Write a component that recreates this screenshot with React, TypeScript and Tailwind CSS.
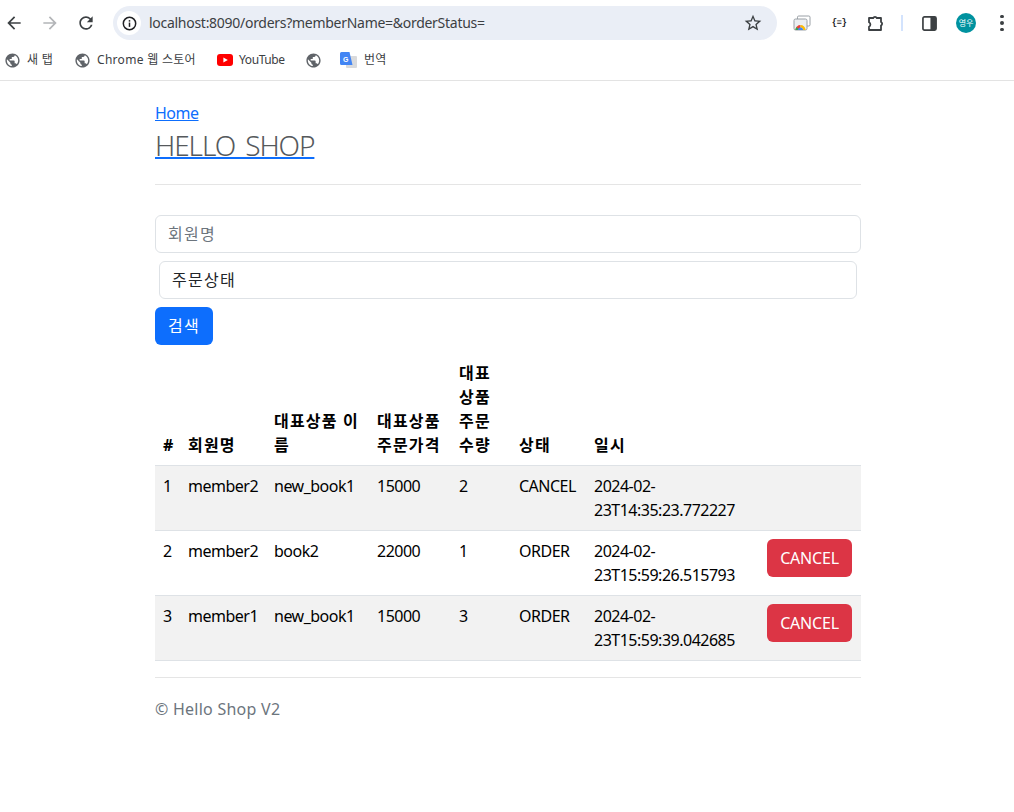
const font = "font-['Noto_Sans','Noto_Sans_CJK_KR',sans-serif]"

const orders = [
  { id: 1, member: 'member2', item: 'new_book1', price: 15000, count: 2, status: 'CANCEL', date: '2024-02-23T14:35:23.772227' },
  { id: 2, member: 'member2', item: 'book2', price: 22000, count: 1, status: 'ORDER', date: '2024-02-23T15:59:26.515793' },
  { id: 3, member: 'member1', item: 'new_book1', price: 15000, count: 3, status: 'ORDER', date: '2024-02-23T15:59:39.042685' },
]

const headers = ['#', '회원명', '대표상품 이름', '대표상품 주문가격', '대표상품 주문수량', '상태', '일시', '']

function Icon({ d, className }: { d: string; className: string }) {
  return (
    <svg viewBox="0 0 24 24" fill="currentColor" className={className}>
      <path d={d} />
    </svg>
  )
}

const backPath = 'M20 11H7.83l5.59-5.59L12 4l-8 8 8 8 1.41-1.41L7.83 13H20v-2z'
const forwardPath = 'M12 4l-1.41 1.41L16.17 11H4v2h12.17l-5.58 5.59L12 20l8-8z'
const reloadPath =
  'M17.65 6.35A7.958 7.958 0 0012 4c-4.42 0-7.99 3.58-7.99 8s3.57 8 7.99 8c3.73 0 6.84-2.55 7.73-6h-2.08A5.99 5.99 0 0112 18c-3.31 0-6-2.69-6-6s2.69-6 6-6c1.66 0 3.14.69 4.22 1.78L13 11h7V4l-2.35 2.35z'
const starPath =
  'M22 9.24l-7.19-.62L12 2 9.19 8.63 2 9.24l5.46 4.73L5.82 21 12 17.27 18.18 21l-1.63-7.03L22 9.24zM12 15.4l-3.76 2.27 1-4.28-3.32-2.88 4.38-.38L12 6.1l1.71 4.04 4.38.38-3.32 2.88 1 4.28L12 15.4z'
const globePath =
  'M12 2C6.48 2 2 6.48 2 12s4.48 10 10 10 10-4.48 10-10S17.52 2 12 2zm-1 17.93c-3.95-.49-7-3.85-7-7.93 0-.62.08-1.21.21-1.79L9 15v1c0 1.1.9 2 2 2v1.93zm6.9-2.54c-.26-.81-1-1.39-1.9-1.39h-1v-3c0-.55-.45-1-1-1H8v-2h2c.55 0 1-.45 1-1V7h2c1.1 0 2-.9 2-2v-.41c2.93 1.19 5 4.06 5 7.41 0 2.08-.8 3.97-2.1 5.39z'

function Globe() {
  return <Icon d={globePath} className="h-[17px] w-[17px] shrink-0 text-[#5f6368]" />
}

function Toolbar() {
  return (
    <div className="flex h-[40px] items-center pt-[6px]">
      <div className="flex w-[113px] shrink-0 items-center pl-[4px] text-[#3c4043]">
        <Icon d={backPath} className="h-[20px] w-[20px]" />
        <Icon d={forwardPath} className="ml-[16px] h-[20px] w-[20px] text-[#b3b5b8]" />
        <Icon d={reloadPath} className="ml-[16px] h-[20px] w-[20px]" />
      </div>
      <div className="flex h-[34px] w-[664px] shrink-0 items-center rounded-full bg-[#eaeef6] pl-[4px] pr-[14px]">
        <div className="flex h-[24px] w-[24px] shrink-0 items-center justify-center rounded-full bg-white">
          <svg viewBox="0 0 16 16" className="h-[15px] w-[15px]" fill="none">
            <circle cx="8" cy="8" r="6.6" stroke="#202124" strokeWidth="1.6" />
            <rect x="7.2" y="7" width="1.6" height="4.6" fill="#202124" />
            <rect x="7.2" y="4.4" width="1.6" height="1.6" fill="#202124" />
          </svg>
        </div>
        <span className="ml-[8px] flex-1 whitespace-nowrap text-[14px] tracking-[-0.28px] text-[#3c4043]">
          localhost:8090/orders?memberName=&amp;orderStatus=
        </span>
        <Icon d={starPath} className="h-[20px] w-[20px] text-[#3c4043]" />
      </div>
      <div className="flex flex-1 items-center pl-[16px]">
        {/* media / tab search */}
        <svg viewBox="0 0 18 16" className="h-[16px] w-[18px]" fill="none">
          <rect x="4.5" y="1" width="12.5" height="10" rx="1.2" stroke="#9aa0a6" />
          <rect x="1" y="4" width="13" height="11" rx="1.5" fill="#eceff1" stroke="#9aa0a6" />
          <path d="M2.500 15a5 5 0 0 1 5-5v5z" fill="#ea4335" />
          <path d="M7.500 10a5 5 0 0 1 5 5h-2.500a2.500 2.500 0 0 0-2.500-2.500z" fill="#fbbc04" />
          <path d="M5 15a2.500 2.500 0 0 1 5 0z" fill="#4285f4" />
          <path d="M2.500 15a5 5 0 0 1 .8-2.700l1.900 1.300a2.500 2.500 0 0 0-.2 1.400z" fill="#34a853" />
        </svg>
        <span className="ml-[20px] w-[16px] text-center font-['Liberation_Mono',monospace] text-[9px] font-bold tracking-[-0.5px] text-[#202124]">
          {'{≡}'}
        </span>
        <svg viewBox="0 0 18 18" className="ml-[20px] h-[18px] w-[18px]" fill="none" stroke="#3c4043" strokeWidth="1.8" strokeLinejoin="round">
          <path d="M2 4h4.200a2 2 0 0 1 3.600 0H14v4a2 2 0 0 1 0 3.600V16H2v-3.200a2.600 2.600 0 0 0 0-4.600z" />
        </svg>
        <div className="ml-[16px] h-[16px] w-[2px] bg-[#d3e3fd]" />
        <svg viewBox="0 0 16 16" className="ml-[19px] h-[15px] w-[15px]">
          <rect x="1" y="1" width="14" height="14" rx="1.6" fill="none" stroke="#3c4043" strokeWidth="1.8" />
          <rect x="9" y="1" width="6" height="14" fill="#3c4043" />
        </svg>
        <div className="ml-[19px] flex h-[20px] w-[20px] items-center justify-center rounded-full bg-[#00929f] text-[8px] text-white">
          영우
        </div>
        <div className="ml-[24px] flex flex-col gap-[3px]">
          <span className="h-[3.5px] w-[3.5px] rounded-full bg-[#3c4043]" />
          <span className="h-[3.5px] w-[3.5px] rounded-full bg-[#3c4043]" />
          <span className="h-[3.5px] w-[3.5px] rounded-full bg-[#3c4043]" />
        </div>
      </div>
    </div>
  )
}

function Bookmarks() {
  return (
    <div className="flex h-[41px] items-center border-b border-[#e3e3e3] pl-[4px] text-[12px] text-[#3c4043]">
      <Globe />
      <span className="ml-[6px] w-[28px] whitespace-nowrap tracking-[0.3px]">새 탭</span>
      <div className="ml-[19px]">
        <Globe />
      </div>
      <span className="ml-[6px] w-[100px] whitespace-nowrap tracking-[0.3px]">Chrome 웹 스토어</span>
      <svg viewBox="0 0 16 12" className="ml-[20px] h-[12px] w-[16px] shrink-0">
        <rect width="16" height="12" rx="3" fill="#ff0000" />
        <path d="M6.400 3.400 10.800 6l-4.400 2.600z" fill="#fff" />
      </svg>
      <span className="ml-[6px] w-[46px] whitespace-nowrap tracking-[-0.4px]">YouTube</span>
      <div className="ml-[20px]">
        <Globe />
      </div>
      <svg viewBox="0 0 17 17" className="ml-[18px] h-[17px] w-[17px] shrink-0">
        <rect x="6" y="4" width="11" height="12" rx="1" fill="#d9dadc" />
        <path d="M1.500 0h8l3 13H1.500A1.500 1.500 0 0 1 0 11.500V1.500A1.500 1.500 0 0 1 1.500 0z" fill="#4285f4" />
        <text x="3" y="9.500" fontSize="7" fontWeight="700" fill="#fff" fontFamily="Liberation Sans">
          G
        </text>
      </svg>
      <span className="ml-[7px] whitespace-nowrap tracking-[0.3px]">번역</span>
    </div>
  )
}

export default function App() {
  return (
    <div className={`${font} min-h-[812px] bg-white text-[16px] leading-[24px] text-[#212529]`}>
      <Toolbar />
      <Bookmarks />

      <div className="ml-[155px] w-[706px] pt-[20px]">
        <a href="#" className="block w-fit tracking-[-0.5px] text-[#0d6efd] underline">
          Home
        </a>
        <div className="border-b border-[#e5e5e5] pb-[22px]">
          <a href="#" className="mt-[3px] block w-fit text-[28px] leading-[34px] font-light tracking-[-1.1px] [word-spacing:4px] text-[#55595c] underline decoration-[#0d6efd] decoration-2">
            HELLO SHOP
          </a>
        </div>

        <form className="mt-[30px]">
          <input
            placeholder="회원명"
            className="block h-[38px] w-full rounded-[6px] border border-[#dee2e6] px-[12px] tracking-[1.3px] placeholder:text-[#6c757d]"
          />
          <select className="mx-[4px] mt-[8px] block h-[38px] w-[698px] appearance-none rounded-[6px] border border-[#dee2e6] bg-white px-[12px] tracking-[1.3px]">
            <option>주문상태</option>
          </select>
          <button type="button" className="mt-[8px] block h-[38px] w-[58px] rounded-[6px] bg-[#0d6efd] tracking-[1.3px] text-white">
            검색
          </button>
        </form>

        <table className="mt-[8px] w-full table-fixed border-collapse text-black">
          <colgroup>
            <col className="w-[25px]" />
            <col className="w-[86px]" />
            <col className="w-[103px]" />
            <col className="w-[82px]" />
            <col className="w-[60px]" />
            <col className="w-[75px]" />
            <col className="w-[173px]" />
            <col className="w-[102px]" />
          </colgroup>
          <thead>
            <tr className="border-b border-[#dee2e6]">
              {headers.map((h, i) => (
                <th key={i} className="break-words p-[8px] text-left align-bottom font-bold tracking-[1.2px]">
                  {h}
                </th>
              ))}
            </tr>
          </thead>
          <tbody className="tracking-[-0.5px]">
            {orders.map((o, i) => (
              <tr key={o.id} className={`border-b border-[#dee2e6] ${i % 2 === 0 ? 'bg-[#f2f2f2]' : ''}`}>
                <td className="p-[8px] align-top">{o.id}</td>
                <td className="p-[8px] align-top">{o.member}</td>
                <td className="p-[8px] align-top">{o.item}</td>
                <td className="p-[8px] align-top">{o.price}</td>
                <td className="p-[8px] align-top">{o.count}</td>
                <td className="p-[8px] align-top">{o.status}</td>
                <td className="p-[8px] align-top">{o.date}</td>
                <td className="p-[8px] align-top">
                  {o.status === 'ORDER' && (
                    <button type="button" className="h-[38px] w-[85px] rounded-[6px] bg-[#dc3545] tracking-[-0.2px] text-white">
                      CANCEL
                    </button>
                  )}
                </td>
              </tr>
            ))}
          </tbody>
        </table>

        <div className="mt-[16px] border-t border-[#e5e5e5] pt-[19px] tracking-[0.25px] text-[#6c757d]">© Hello Shop V2</div>
      </div>
    </div>
  )
}
